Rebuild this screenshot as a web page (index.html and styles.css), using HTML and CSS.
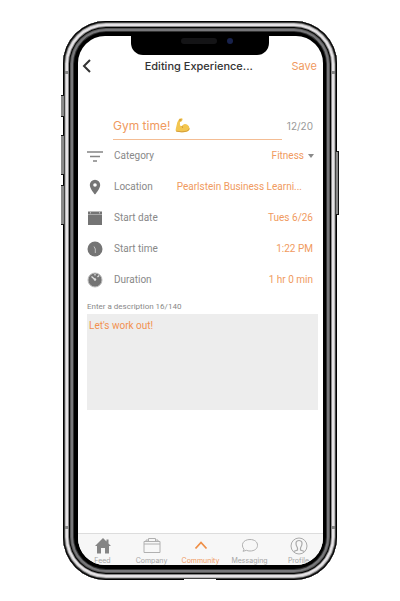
FILE: index.html
```html
<!DOCTYPE html>
<html lang="en">
<head>
<meta charset="utf-8">
<meta name="viewport" content="width=device-width, initial-scale=1">
<title>Editing Experience</title>
<link rel="stylesheet" href="styles.css">
</head>
<body>
<div class="phone">
  <span class="key key-mute"></span><span class="key key-up"></span><span class="key key-down"></span><span class="key key-power"></span>
  <span class="band band-tl"></span><span class="band band-tr"></span><span class="band band-bl"></span><span class="band band-br"></span>
  <span class="port"></span>
  <div class="notch"><span class="speaker"></span><span class="camera"></span></div>
  <div class="screen">
    <header class="topbar">
      <button class="back" type="button" aria-label="Back"><svg width="10" height="16" viewBox="0 0 10 16"><path d="M8 2 2 8l6 6" fill="none" stroke="#333" stroke-width="2"/></svg></button>
      <h1>Editing Experience...</h1>
      <button class="save" type="button">Save</button>
    </header>
    <form class="form">
      <div class="title-row">
        <div class="title-field">
          <input class="title-input" type="text" value="Gym time!" aria-label="Title">
          <svg width="15" height="15" viewBox="0 0 15 15"><path d="M4.300.7 6.700.3Q8 .6 7.500 2L6.400 3.600 4.900 4 5 7.600Q6.300 8.500 7.600 7.400 9.400 5.300 12 6.600 14.600 8 14.500 10.700 14.100 13.400 10.500 13.900 5.500 14.600 1.500 13.500.3 13 .7 11.300L2.300 4.200Z" fill="#f3c650"/><path d="M1.200 13.200Q7.500 14.500 11.500 13.200 14 12.500 14.400 10.500M7.400 7.700Q6.800 9 7.800 10M4.400 1.700 6.400 1.500M4.300 2.800 6.200 2.700" fill="none" stroke="#cd9435" stroke-width=".8"/></svg>
        </div>
        <span class="count">12/20</span>
      </div>
      <div class="row">
        <svg class="icon" width="16" height="16" viewBox="0 0 16 16"><path d="M0 4h16M3 8.500h10M6 13h4" stroke="#858585" stroke-width="1.600"/></svg>
        <label for="category">Category</label>
        <select id="category" class="value"><option>Fitness</option></select>
        <svg class="caret" width="6" height="4" viewBox="0 0 6 4"><path d="M0 0h6L3 4Z" fill="#8a8a8a"/></svg>
      </div>
      <div class="row">
        <svg class="icon" width="16" height="16" viewBox="0 0 16 16"><path fill-rule="evenodd" d="M8 .8a5.200 5.200 0 0 0-5.200 5.200c0 3.800 5.200 9.600 5.200 9.600S13.200 9.800 13.200 6A5.200 5.200 0 0 0 8 .8Zm0 3.400a1.800 1.800 0 1 1 0 3.600 1.800 1.800 0 0 1 0-3.600Z" fill="#757575"/></svg>
        <label for="location">Location</label>
        <button id="location" class="value place" type="button">Pearlstein Business Learni...</button>
      </div>
      <div class="row">
        <svg class="icon" width="16" height="16" viewBox="0 0 16 16"><path d="M1 1.500h14v13.500H1Z" fill="#747474"/><path d="M1 4.500h14" stroke="#aaa"/><path d="M3.500 1.500v2M12.500 1.500v2" stroke="#bbb"/></svg>
        <label for="date">Start date</label>
        <button id="date" class="value" type="button">Tues 6/26</button>
      </div>
      <div class="row">
        <svg class="icon" width="16" height="16" viewBox="0 0 16 16"><circle cx="8" cy="8" r="7.500" fill="#747474"/><path d="M7 5.500 8.300 8v4" fill="none" stroke="#c4c4c4"/></svg>
        <label for="time">Start time</label>
        <button id="time" class="value" type="button">1:22 PM</button>
      </div>
      <div class="row">
        <svg class="icon" width="16" height="16" viewBox="0 0 16 16"><circle cx="8" cy="8" r="7" fill="#747474" stroke="#bbb"/><path d="m4.500 4.500 4 3.500M8 2v1.500M10.500 5l1.500-1.500" stroke="#e0e0e0" stroke-width="1.300"/><circle cx="8" cy="7.500" r="1.200" fill="#ddd"/></svg>
        <label for="duration">Duration</label>
        <button id="duration" class="value" type="button">1 hr 0 min</button>
      </div>
      <label class="hint" for="description">Enter a description 16/140</label>
      <textarea id="description" class="description">Let's work out!</textarea>
    </form>
    <nav class="tabs">
      <a href="#feed"><svg width="18" height="18" viewBox="0 0 18 18"><path d="M9 1 1 9h2v7.500h4V11h4v5.500h4V9h2l-2.500-2.600V2.500h-2v2Z" fill="#858585"/></svg>Feed</a>
      <a href="#company"><svg width="18" height="18" viewBox="0 0 18 18"><path d="M1 4.500h16v11H1ZM1 7h16M5.500 4.500v-3h7v3M3 4.500V3h2M13 3h2v1.500" fill="none" stroke="#b0b0b0"/></svg>Company</a>
      <a class="active" href="#community"><svg width="18" height="18" viewBox="0 0 18 18"><path d="m3.500 11.500 5.500-6 5.500 6" fill="none" stroke="#ef8f47" stroke-width="1.800"/></svg>Community</a>
      <a href="#messaging"><svg width="18" height="18" viewBox="0 0 18 18"><path d="M3 12.300C-.5 8 2 2.500 9 2.500c4.500 0 7.500 2.300 7.500 5.800s-3 5.700-7.500 5.700c-1.400 0-2.500-.2-3.500-.7L2 14.300Z" fill="none" stroke="#b0b0b0"/></svg>Messaging</a>
      <a href="#profile"><svg width="18" height="18" viewBox="0 0 18 18"><circle cx="9" cy="9" r="8" fill="none" stroke="#aaa"/><path d="M3.500 14.500 7.500 13v-2C5 7 5.500 3.500 9 3.500S13 7 10.500 11v2l4 1.500" fill="none" stroke="#aaa" stroke-width="1.200"/></svg>Profile</a>
    </nav>
  </div>
</div>
</body>
</html>
```
FILE: styles.css
```css
* { box-sizing: border-box; }
body { margin: 0; padding: 21px 63px; background: #fff; font-family: Inter, "Liberation Sans", sans-serif; color: #888; }
button, input, select, textarea { font: inherit; color: inherit; background: none; border: 0; padding: 0; margin: 0; border-radius: 0; outline: 0; }
.phone {
  position: relative; display: flex; min-height: calc(100vh - 42px); padding: 15px 14px 15px 15px; border-radius: 43px; background: #000;
  box-shadow: inset 0 0 0 1px #000, inset 0 0 0 2px #444, inset 0 0 0 3px #bbb, inset 0 0 0 5px #e6e3e6, inset 0 0 0 6px #888, inset 0 0 0 7px #050505, inset 0 0 0 8px #555, inset 0 0 0 10px #77777a, inset 0 0 0 11px #333;
}
.screen { flex: 1; min-width: 0; display: flex; flex-direction: column; overflow: hidden; border-radius: 27px; background: #fff; }
.notch { position: absolute; top: 13px; left: 50%; width: 138px; height: 21px; transform: translateX(-50%); border-radius: 0 0 12px 12px; background: #000; }
.speaker { position: absolute; left: 50px; top: 4px; width: 36px; height: 6px; border-radius: 3px; background: #141416; }
.camera { position: absolute; left: 96px; top: 4px; width: 6px; height: 6px; border-radius: 50%; background: #18224c; }
.key { position: absolute; width: 3px; border: solid #111; border-width: 1px 0; background: #888; }
.key-mute { left: -2px; top: 74px; height: 22px; }
.key-up { left: -2px; top: 114px; height: 40px; }
.key-down { left: -2px; top: 164px; height: 40px; }
.key-power { right: -2px; top: 130px; height: 64px; border-right-width: 1px; }
.band { position: absolute; width: 4px; height: 3px; background: #888; }
.band-tl, .band-bl { left: 2px; }
.band-tr, .band-br { right: 2px; }
.band-tl, .band-tr { top: 50px; }
.band-bl, .band-br { bottom: 51px; }
.port { position: absolute; bottom: 0; left: 50%; width: 32px; height: 1px; transform: translateX(-50%); background: #fff; }
.topbar { display: flex; align-items: center; justify-content: space-between; height: 20px; margin-top: 20px; padding: 0 6px 0 4px; }
.back { display: flex; width: 24px; }
h1 { margin: 0; font-size: 11px; line-height: 16px; font-weight: 500; color: #333; }
.save { font-size: 11px; line-height: 16px; color: #f09a60; }
.form { flex: 1; display: flex; flex-direction: column; padding: 36px 5px 0 9px; }
.title-row { display: flex; align-items: center; padding: 0 5px 0 26px; }
.title-field { flex: 1; display: flex; align-items: center; gap: 2px; height: 28px; border-bottom: 1px solid #f4bd94; margin-right: 5px; }
.title-input { width: 60px; font-size: 12px; line-height: 16px; color: #f09a60; }
.count { font-size: 10px; line-height: 16px; color: #999; }
.row { display: flex; align-items: center; height: 31px; padding-right: 5px; font-family: Roboto, "Liberation Sans", sans-serif; font-size: 10px; line-height: 16px; }
.icon { flex: none; margin-right: 11px; }
.value { margin-left: auto; color: #f09a60; text-align: right; }
.place { padding-right: 11px; }
select.value { appearance: none; text-align-last: right; }
.caret { margin: 0 -1px 0 4px; }
.hint { font-family: Roboto, "Liberation Sans", sans-serif; font-size: 8px; line-height: 12px; padding: 6px 0 1px; }
.description { display: block; width: 100%; height: 96px; padding: 4px 2px; resize: none; background: #ededed; color: #f29150; font-family: Roboto, "Liberation Sans", sans-serif; font-size: 10px; line-height: 16px; }
.tabs { display: grid; grid-template-columns: repeat(5, 1fr); height: 32px; border-top: 1px solid #ddd; background: #f7f7f7; padding-top: 3px; }
.tabs a { display: flex; flex-direction: column; align-items: center; gap: 2px; color: #a5a5a5; font-size: 7px; line-height: 8px; text-decoration: none; }
.tabs .active { color: #f09a60; }
```
